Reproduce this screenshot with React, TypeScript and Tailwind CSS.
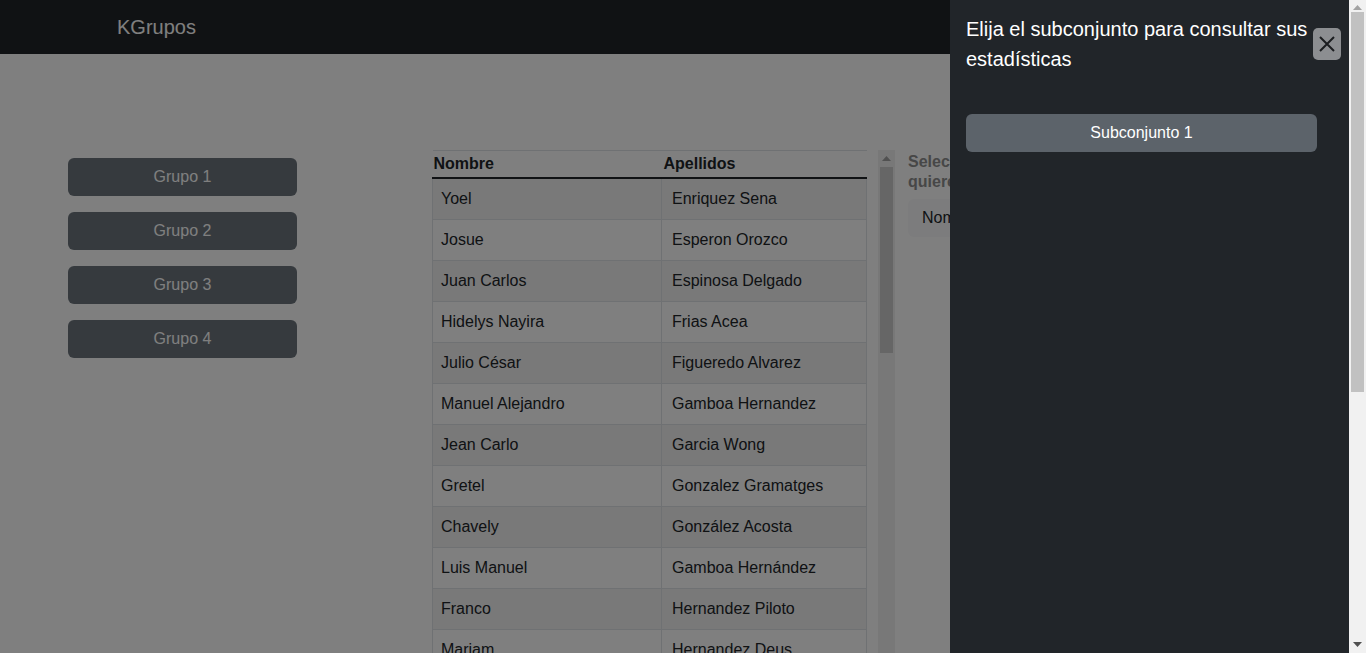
import React from "react";

const rows: [string, string][] = [
  ["Yoel", "Enriquez Sena"],
  ["Josue", "Esperon Orozco"],
  ["Juan Carlos", "Espinosa Delgado"],
  ["Hidelys Nayira", "Frias Acea"],
  ["Julio César", "Figueredo Alvarez"],
  ["Manuel Alejandro", "Gamboa Hernandez"],
  ["Jean Carlo", "Garcia Wong"],
  ["Gretel", "Gonzalez Gramatges"],
  ["Chavely", "González Acosta"],
  ["Luis Manuel", "Gamboa Hernández"],
  ["Franco", "Hernandez Piloto"],
  ["Mariam", "Hernandez Deus"],
  ["Alejandro", "Herrera Soto"],
  ["Daniela", "Izquierdo Pérez"],
];

function UpArrow({ color }: { color: string }) {
  return (
    <svg width="9" height="5" viewBox="0 0 9 5">
      <path d="M0 5 L4.5 0 L9 5 Z" fill={color} />
    </svg>
  );
}

function DownArrow({ color }: { color: string }) {
  return (
    <svg width="9" height="5" viewBox="0 0 9 5">
      <path d="M0 0 L4.5 5 L9 0 Z" fill={color} />
    </svg>
  );
}

export default function App() {
  return (
    <div className="h-screen flex overflow-hidden bg-white text-[#212529] [font-family:'Liberation_Sans',Arial,sans-serif]">
      <div className="flex-1 overflow-hidden">
        <nav className="h-[54px] bg-[#212529] flex items-center pl-[117px]">
          <span className="text-white text-[20px] leading-[30px]">KGrupos</span>
        </nav>
        <main className="flex items-start">
          <div className="w-[432px] pl-[68px] pt-[104px] flex flex-col gap-[16px]">
            {["Grupo 1", "Grupo 2", "Grupo 3", "Grupo 4"].map((g) => (
              <button
                key={g}
                className="w-[229px] h-[38px] rounded-[6px] bg-[#6c757d] text-white text-[16px]"
              >
                {g}
              </button>
            ))}
          </div>
          <div className="mt-[96px] h-[520px] flex">
            <div className="w-[446px] overflow-hidden">
              <table className="w-[434px] table-fixed border-collapse text-[16px] leading-[24px]">
                <thead>
                  <tr className="border-t border-[#dee2e6] border-b-2 border-b-[#212529]">
                    <th className="w-[229px] text-left font-bold pl-[1px] pr-[2px] py-[1px]">Nombre</th>
                    <th className="w-[205px] text-left font-bold pl-[2px] pr-[2px] py-[1px]">Apellidos</th>
                  </tr>
                </thead>
                <tbody>
                  {rows.map(([n, a], i) => (
                    <tr key={i} className={i % 2 === 0 ? "bg-[#f2f2f2]" : "bg-white"}>
                      <td className="border border-[#dee2e6] px-[8px] py-[8px] whitespace-nowrap">{n}</td>
                      <td className="border border-[#dee2e6] pl-[10px] pr-[8px] py-[8px] whitespace-nowrap">{a}</td>
                    </tr>
                  ))}
                </tbody>
              </table>
            </div>
            <div className="w-[17px] bg-[#f1f1f1] flex flex-col">
              <div className="h-[17px] flex items-center justify-center">
                <UpArrow color="#a3a3a3" />
              </div>
              <div className="mx-[2px] h-[186px] bg-[#cdcdcd]" />
            </div>
          </div>
          <div className="ml-[13px] mt-[96px] w-[262px]">
            <p className="font-bold text-[#8e8e8e] text-[16px] leading-[20px] pt-[2px]">
              Seleccione los estudiantes que quiere agregar al grupo
            </p>
            <div className="mt-[7px] bg-[#f8f9fa] rounded-[6px] px-[14px] py-[7px] text-[16px] leading-[24px] text-[#212529]">
              Nombre
            </div>
          </div>
        </main>
      </div>

      <div className="w-[17px] bg-[#f1f1f1] flex flex-col">
        <div className="h-[12px] flex items-center justify-center pt-[2px]">
          <UpArrow color="#a3a3a3" />
        </div>
        <div className="mx-[2px] h-[380px] bg-[#c1c1c1]" />
        <div className="flex-1" />
        <div className="h-[17px] flex items-center justify-center">
          <DownArrow color="#505050" />
        </div>
      </div>

      <div className="fixed top-0 left-0 bottom-0 right-[17px] bg-black/50" />

      <aside className="fixed top-0 bottom-0 right-[17px] w-[399px] bg-[#212529]">
        <div className="flex items-start justify-between pl-[16px] pr-[8px] pt-[14px]">
          <h5 className="w-[345px] text-white text-[20px] leading-[30px]">
            Elija el subconjunto para consultar sus estadísticas
          </h5>
          <button className="mt-[14px] w-[28px] h-[32px] rounded-[5px] bg-[#8c8e91] flex items-center justify-center">
            <svg width="20" height="20" viewBox="0 0 20 20">
              <path d="M3 3 L17 17 M17 3 L3 17" stroke="#1b1d20" strokeWidth="2" fill="none" />
            </svg>
          </button>
        </div>
        <div className="px-[16px] pt-[40px]">
          <button className="w-[351px] h-[38px] rounded-[6px] bg-[#5c636a] text-white text-[16px]">
            Subconjunto 1
          </button>
        </div>
      </aside>
    </div>
  );
}
